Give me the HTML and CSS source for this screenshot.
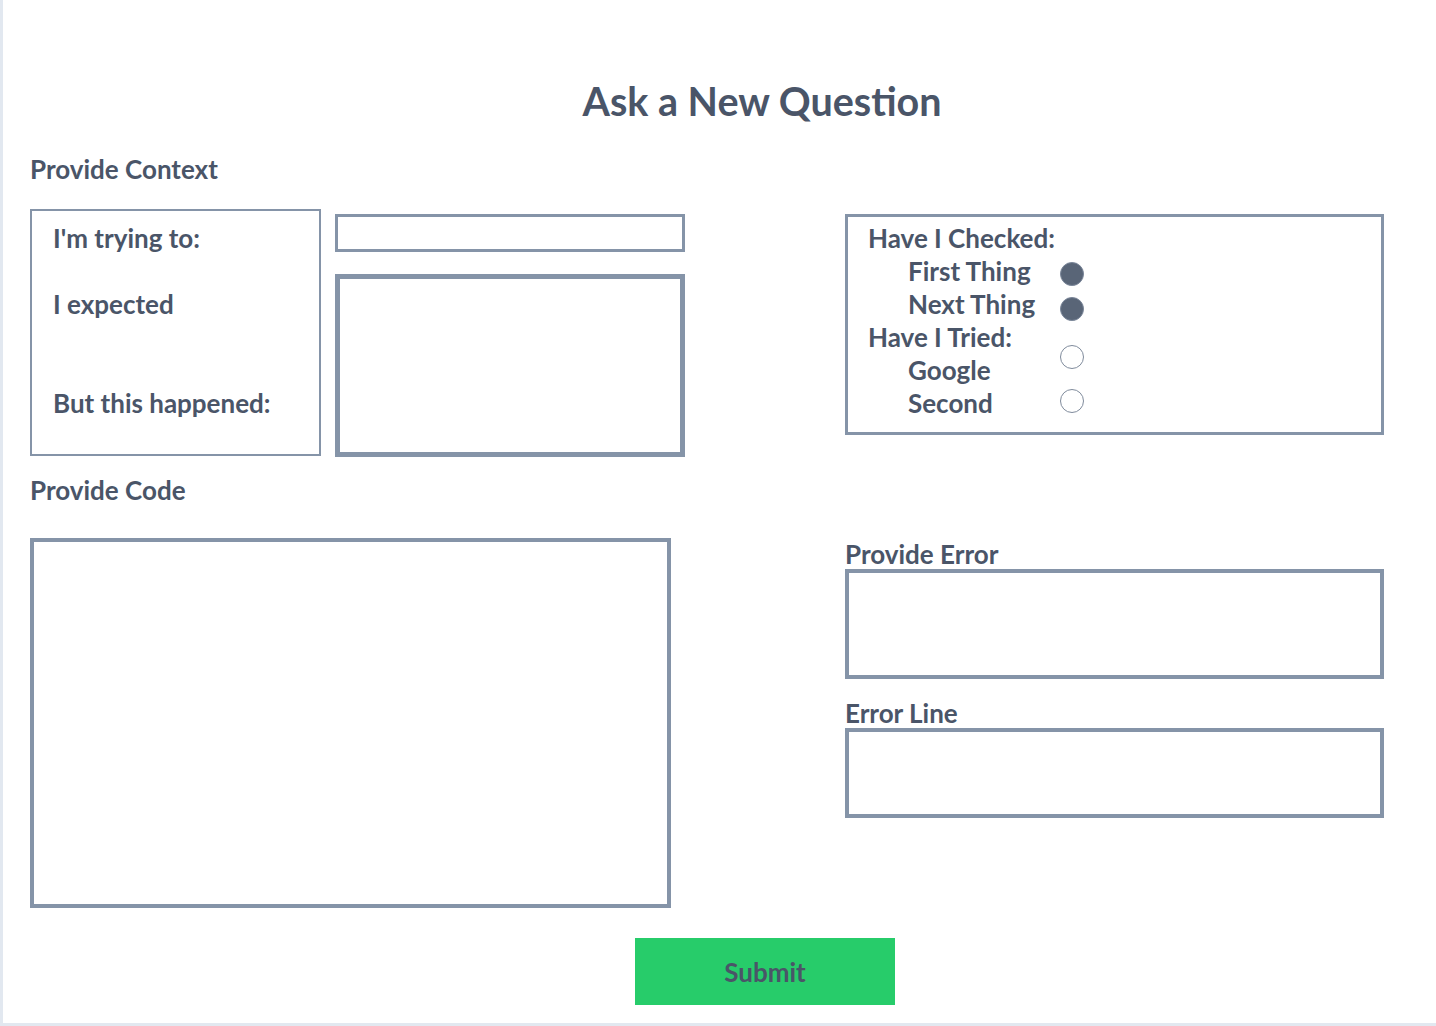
FILE: index.html
```html
<!DOCTYPE html>
<html lang="en">
<head>
<meta charset="utf-8">
<title>Ask a New Question</title>
<link rel="stylesheet" href="styles.css">
</head>
<body>
<div class="page">
  <h1 class="title">Ask a New Question</h1>
  <h2 class="section-label context-label">Provide Context</h2>
  <div class="context-row">
    <div class="prompt-box">
      <p class="prompt p1">I'm trying to:</p>
      <p class="prompt p2">I expected</p>
      <p class="prompt p3">But this happened:</p>
    </div>
    <div class="prompt-inputs">
      <input class="field-line" type="text">
      <textarea class="field-area"></textarea>
    </div>
    <div class="checklist">
      <div class="check-labels">
        <div class="check-head">Have I Checked:</div>
        <div class="check-item">First Thing</div>
        <div class="check-item">Next Thing</div>
        <div class="check-head">Have I Tried:</div>
        <div class="check-item">Google</div>
        <div class="check-item">Second</div>
      </div>
      <div class="check-radios">
        <span class="radio filled r1"></span>
        <span class="radio filled r2"></span>
        <span class="radio r3"></span>
        <span class="radio r4"></span>
      </div>
    </div>
  </div>
  <h2 class="section-label code-label">Provide Code</h2>
  <div class="code-row">
    <textarea class="code-box"></textarea>
    <div class="error-col">
      <div class="section-label">Provide Error</div>
      <textarea class="error-box"></textarea>
      <div class="section-label errline-label">Error Line</div>
      <textarea class="errline-box"></textarea>
    </div>
  </div>
  <div class="actions">
    <button class="submit" type="button">Submit</button>
  </div>
</div>
</body>
</html>
```
FILE: styles.css
```css
html, body {
  margin: 0;
  padding: 0;
}
body {
  background: #e2e8f0;
  font-family: Lato, "Noto Sans", sans-serif;
  color: #4a5568;
}
.page {
  margin-left: 3px;
  height: 1023px;
  background: #ffffff;
  padding: 78px 0 0 27px;
  box-sizing: border-box;
}
.title {
  margin: 0;
  font-size: 39.5px;
  line-height: 45px;
  font-weight: 700;
  text-align: center;
  padding-left: 58px;
}
.section-label {
  margin: 0;
  font-size: 26px;
  line-height: 29px;
  font-weight: 700;
}
.context-label {
  margin-top: 32px;
}
.context-row {
  display: flex;
  align-items: flex-start;
  margin-top: 25px;
}
.prompt-box {
  width: 291px;
  height: 247px;
  box-sizing: border-box;
  border: 2px solid #8594a8;
  padding: 13px 0 0 21px;
}
.prompt {
  margin: 0;
  font-size: 26px;
  line-height: 29px;
  font-weight: 700;
}
.p2 { margin-top: 37px; }
.p3 { margin-top: 70px; }
.prompt-inputs {
  margin-left: 14px;
  margin-top: 5px;
  width: 350px;
  display: flex;
  flex-direction: column;
}
.field-line {
  display: block;
  width: 350px;
  height: 38px;
  box-sizing: border-box;
  border: 3px solid #8594a8;
  margin: 0;
  padding: 0;
  background: #fff;
  outline: none;
}
.field-area {
  display: block;
  width: 350px;
  height: 183px;
  margin: 22px 0 0;
  box-sizing: border-box;
  border: 5px solid #8594a8;
  resize: none;
  background: #fff;
  outline: none;
}
.checklist {
  margin-left: 160px;
  margin-top: 5px;
  width: 539px;
  height: 221px;
  box-sizing: border-box;
  border: 3px solid #8594a8;
  padding: 5px 0 0 20px;
  display: flex;
}
.check-labels {
  width: 192px;
  font-size: 26px;
  line-height: 33px;
  font-weight: 700;
}
.check-item {
  padding-left: 40px;
}
.check-radios {
  display: flex;
  flex-direction: column;
  padding-top: 40px;
}
.radio {
  display: block;
  width: 24px;
  height: 24px;
  box-sizing: border-box;
  border-radius: 50%;
  border: 1.5px solid #7f8b9c;
  background: #fff;
}
.radio.filled {
  background: #596577;
  border-color: #7a8699;
}
.r2 { margin-top: 11px; }
.r3 { margin-top: 24px; }
.r4 { margin-top: 20px; }
.code-label {
  margin-top: 19px;
}
.code-row {
  display: flex;
  align-items: flex-start;
  margin-top: 33px;
}
.code-box {
  display: block;
  width: 641px;
  height: 370px;
  margin: 0;
  box-sizing: border-box;
  border: 4px solid #8594a8;
  resize: none;
  outline: none;
}
.error-col {
  margin-left: 174px;
  margin-top: 2px;
  width: 539px;
  display: flex;
  flex-direction: column;
}
.error-box,
.errline-box {
  display: block;
  width: 539px;
  margin: 0;
  box-sizing: border-box;
  border: 4px solid #8594a8;
  resize: none;
  outline: none;
}
.error-box { height: 110px; }
.errline-box { height: 90px; }
.errline-label { margin-top: 20px; }
.actions {
  display: flex;
  justify-content: center;
  margin-top: 30px;
  padding-left: 64px;
}
.submit {
  width: 260px;
  height: 67px;
  border: none;
  background: #27cc6a;
  color: #4a5568;
  font-family: Lato, "Noto Sans", sans-serif;
  font-size: 26px;
  font-weight: 700;
  cursor: pointer;
}
```
